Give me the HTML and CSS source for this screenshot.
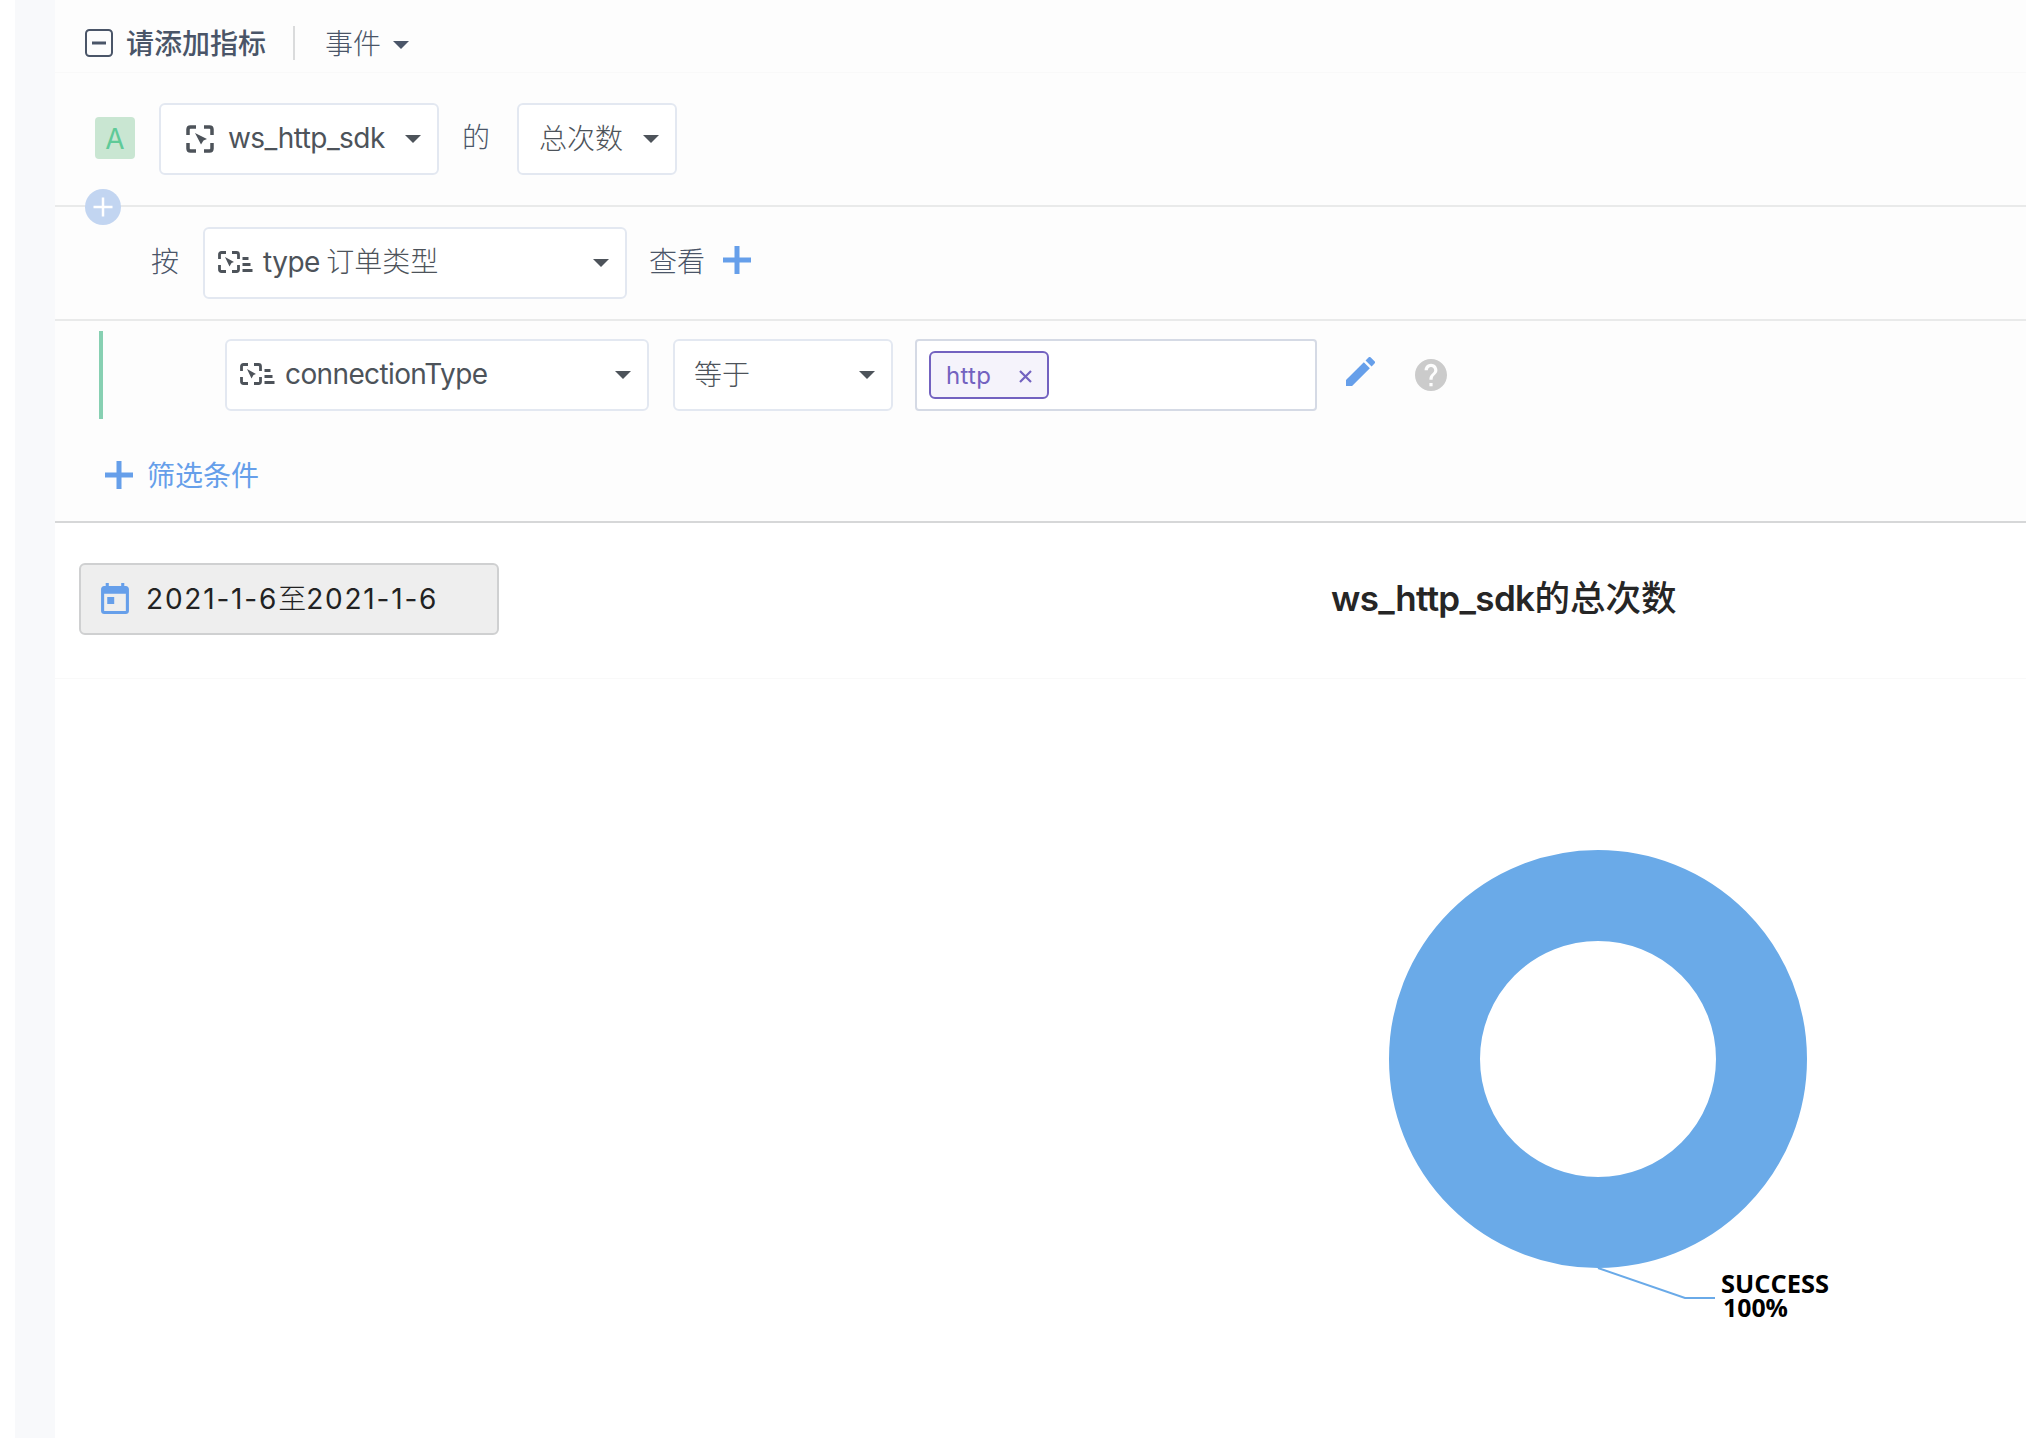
FILE: index.html
```html
<!DOCTYPE html>
<html lang="zh-CN">
<head>
<meta charset="utf-8">
<title>ws_http_sdk的总次数</title>
<link rel="stylesheet" href="styles.css">
</head>
<body>
<svg class="defs" width="0" height="0">
  <symbol id="caret" viewBox="0 0 16 8"><path d="M0 0H16L8 8Z" fill="currentColor"/></symbol>
  <symbol id="plus" viewBox="0 0 28 28"><path d="M14 0V28M0 14H28" stroke="currentColor" stroke-width="5"/></symbol>
  <symbol id="event" viewBox="0 0 28 28">
    <path d="M2 10V4.500Q2 2 4.500 2H10M18 2H23.500Q26 2 26 4.500V10M26 18V23.500Q26 26 23.500 26H18M10 26H4.500Q2 26 2 23.500V18" fill="none" stroke="currentColor" stroke-width="3.500"/>
    <path d="M9 8L21 14L17.500 15.500L15 19.500Z" fill="currentColor"/>
  </symbol>
  <symbol id="prop" viewBox="0 0 35 22">
    <path d="M1.500 8V3.500Q1.500 1.500 3.500 1.500H8M14 1.500H18.500Q20.500 1.500 20.500 3.500V8M20.500 14V18.500Q20.500 20.500 18.500 20.500H14M8 20.500H3.500Q1.500 20.500 1.500 18.500V14" fill="none" stroke="currentColor" stroke-width="2.800"/>
    <path d="M7 6L16 11L13.500 12L11.500 15.500ZM24.500 6H30.500V9H24.500ZM24.500 12H32.500V15H24.500ZM24.500 18H34.500V21H24.500Z" fill="currentColor"/>
  </symbol>
</svg>
<div class="app">
  <aside class="rail"></aside>
  <main class="main">
    <section class="query">
      <header class="row head">
        <svg class="collapse" viewBox="0 0 28 28"><rect x="1" y="1" width="26" height="26" rx="3.500" fill="none" stroke="currentColor" stroke-width="2"/><path d="M7 14H21" stroke="currentColor" stroke-width="3"/></svg>
        <span class="head-title">请添加指标</span>
        <span class="divider"></span>
        <span class="mode">事件</span>
        <svg class="caret"><use href="#caret"/></svg>
      </header>
      <div class="row metric">
        <span class="badge">A</span>
        <div class="select select-event">
          <svg class="event-icon"><use href="#event"/></svg>
          <span class="latin event-name">ws_http_sdk</span>
          <svg class="caret"><use href="#caret"/></svg>
        </div>
        <span class="joiner">的</span>
        <div class="select select-count">
          <span class="value">总次数</span>
          <svg class="caret"><use href="#caret"/></svg>
        </div>
        <svg class="add-metric" viewBox="0 0 36 36"><circle cx="18" cy="18" r="18" fill="#c2d5f1"/><path d="M18 8.500V27.500M8.500 18H27.500" stroke="#fff" stroke-width="2.500"/></svg>
      </div>
      <div class="row group">
        <span class="by">按</span>
        <div class="select select-prop">
          <svg class="prop-icon"><use href="#prop"/></svg>
          <span class="value"><span class="latin prop-type">type</span> 订单类型</span>
          <svg class="caret"><use href="#caret"/></svg>
        </div>
        <span class="view">查看</span>
        <svg class="plus add-group"><use href="#plus"/></svg>
      </div>
      <div class="row filter">
        <span class="bar"></span>
        <div class="select select-prop select-connection">
          <svg class="prop-icon"><use href="#prop"/></svg>
          <span class="latin connection">connectionType</span>
          <svg class="caret"><use href="#caret"/></svg>
        </div>
        <div class="select select-op">
          <span class="value">等于</span>
          <svg class="caret"><use href="#caret"/></svg>
        </div>
        <div class="values">
          <span class="tag"><span class="tag-text">http</span><svg class="close" viewBox="0 0 13 13"><path d="M1 1L12 12M12 1L1 12" stroke="currentColor" stroke-width="2.200"/></svg></span>
        </div>
        <svg class="pencil" viewBox="3 3 18 18"><path fill="currentColor" d="M3 17.250V21h3.750L17.810 9.940l-3.750-3.750L3 17.250zM20.710 7.040a1 1 0 0 0 0-1.410l-2.340-2.340a1 1 0 0 0-1.410 0l-1.830 1.830 3.750 3.750 1.830-1.830z"/></svg>
        <svg class="help" viewBox="2 2 20 20"><path fill="currentColor" d="M12 2C6.480 2 2 6.480 2 12s4.480 10 10 10 10-4.480 10-10S17.520 2 12 2zm1 17h-2v-2h2v2zm2.070-7.750l-.9.920C13.450 12.900 13 13.500 13 15h-2v-.5c0-1.100.45-2.100 1.170-2.830l1.240-1.260c.37-.36.59-.86.59-1.410 0-1.100-.9-2-2-2s-2 .9-2 2H8c0-2.210 1.790-4 4-4s4 1.790 4 4c0 .88-.36 1.680-.93 2.250z"/></svg>
      </div>
      <div class="row add-filter">
        <svg class="plus"><use href="#plus"/></svg>
        <span class="add-filter-text">筛选条件</span>
      </div>
    </section>
    <section class="toolbar">
      <div class="date">
        <svg class="calendar" viewBox="3 1 18 20"><path fill="currentColor" d="M19 3h-1V1h-2v2H8V1H6v2H5c-1.110 0-2 .9-2 2v14c0 1.100.89 2 2 2h14c1.100 0 2-.9 2-2V5c0-1.100-.9-2-2-2zm0 16H5V8h14v11zM7 10h4.500v4.500H7z"/></svg>
        <span class="date-text"><span class="latin">2021-1-6</span>至<span class="latin">2021-1-6</span></span>
      </div>
      <h1 class="title"><span class="title-latin">ws_http_sdk</span>的总次数</h1>
    </section>
    <section class="chart">
      <svg width="1971" height="759" viewBox="55 679 1971 759">
        <circle cx="1598" cy="1059" r="163.500" fill="none" stroke="#6aaae8" stroke-width="91"/>
        <path d="M1598 1268L1685 1298H1715" fill="none" stroke="#6aaae8" stroke-width="2"/>
        <text class="slice-label" x="1721" y="1293" textLength="108" lengthAdjust="spacingAndGlyphs">SUCCESS</text>
        <text class="slice-label" x="1723" y="1317" textLength="65" lengthAdjust="spacingAndGlyphs">100%</text>
      </svg>
    </section>
  </main>
</div>
</body>
</html>
```
FILE: styles.css
```css
* { box-sizing: border-box; }
body {
  margin: 0;
  background: #fff;
  color: #4d535a;
  font: 300 28px/40px "Noto Sans CJK SC", sans-serif;
  overflow: hidden;
}
svg { display: block; flex: none; }
span { white-space: nowrap; }
.defs { position: absolute; }
.latin { font-family: Inter, "Noto Sans CJK SC", sans-serif; font-weight: 400; }
.app { display: flex; height: 1438px; padding-left: 15px; }
.rail { width: 40px; background: #f8f9fb; }
.main { width: 1971px; display: flex; flex-direction: column; background: #fff; }
.query { height: 523px; background: #fdfdfd; border-bottom: 2px solid #d6d7d8; }
.row { display: flex; align-items: center; color: #4a5568; }
.caret { width: 16px; height: 8px; }

.head { height: 73px; padding: 14px 0 0 30px; border-bottom: 1px solid #f9f9f9; }
.collapse { width: 28px; height: 28px; }
.head-title { margin-left: 13px; padding-bottom: 2px; font-weight: 500; }
.divider { width: 2px; height: 34px; margin: 0 30px 0 27px; background: #dadbdc; }
.mode { width: 56px; margin-right: 12px; padding-bottom: 2px; }
.head .caret { margin-top: 4px; }

.metric { position: relative; align-items: flex-start; height: 134px; padding: 30px 0 0 40px; border-bottom: 2px solid #e9eaea; }
.badge { width: 40px; height: 42px; margin-top: 14px; border-radius: 4px; background: #c9e6d2; color: #5fca98; font: 400 28px/44px Inter, sans-serif; text-align: center; }
.select { display: flex; align-items: center; height: 72px; border: 2px solid #e3e8f1; border-radius: 6px; background: #fff; color: #4d535a; }
.select > .caret { margin-left: auto; margin-right: 16px; }
.value { padding-bottom: 5px; }
.select-event { width: 280px; margin-left: 24px; padding-left: 25px; }
.event-icon { width: 28px; height: 28px; margin-right: 14px; }
.event-name { padding-bottom: 3px; letter-spacing: -0.55px; }
.joiner { margin: 13px 27px 0 23px; }
.select-count { width: 160px; padding-left: 20px; }
.add-metric { position: absolute; left: 30px; top: 116px; width: 36px; height: 36px; }

.group { height: 114px; padding: 0 0 0 96px; border-bottom: 2px solid #e9eaea; }
.by { margin-right: 24px; padding-bottom: 7px; }
.select-prop { width: 424px; padding-left: 12px; }
.prop-icon { width: 35px; height: 22px; margin-right: 11px; }
.group .prop-icon { margin-top: -2px; margin-left: 1px; margin-right: 10px; }
.prop-type { letter-spacing: -0.5px; }
.view { margin-left: 22px; padding-bottom: 7px; }
.plus { width: 28px; height: 28px; color: #669fea; }
.add-group { margin: -6px 0 0 18px; }

.filter { height: 108px; padding-left: 44px; }
.bar { width: 4px; height: 88px; background: #87d0b2; }
.select-connection { margin-left: 122px; padding-left: 13px; }
.filter .prop-icon { margin-top: -2px; margin-right: 10px; }
.connection { padding-bottom: 3px; letter-spacing: -0.62px; }
.select-op { width: 220px; margin-left: 24px; padding-left: 19px; }
.values { display: flex; align-items: center; width: 402px; height: 72px; margin-left: 22px; padding-left: 12px; border: 2px solid #d5dae5; border-radius: 4px; background: #fff; }
.tag { display: flex; align-items: center; width: 120px; height: 48px; padding-left: 15px; border: 2px solid #7362c0; border-radius: 6px; background: #f5f3fb; color: #7362c0; font: 400 24px/44px Inter, sans-serif; }
.tag-text { width: 73px; padding-top: 2px; letter-spacing: 0.3px; }
.close { width: 13px; height: 13px; margin-top: 3px; }
.pencil { width: 29px; height: 29px; margin: -7px 0 0 29px; color: #669fea; }
.help { width: 32px; height: 32px; margin-left: 40px; color: #cbcbcb; }

.add-filter { height: 92px; padding-left: 50px; color: #669fea; font-weight: 400; gap: 14px; }
.add-filter-text { padding-bottom: 3px; }

.toolbar { display: flex; align-items: center; height: 156px; padding: 0 0 4px 24px; border-bottom: 1px solid #f9f9f9; }
.date { display: flex; align-items: center; width: 420px; height: 72px; padding-left: 20px; border: 2px solid #cfd0d1; border-radius: 6px; background: #eee; color: #222; }
.calendar { width: 28px; height: 31px; margin-right: 17px; color: #669fea; }
.date-text { padding-bottom: 1px; }
.date .latin { letter-spacing: 1.8px; }
.title { margin: 0 0 0 832px; padding-bottom: 4px; color: #262626; font-size: 35.5px; font-weight: 500; line-height: 50px; }
.title-latin { font-family: Inter, sans-serif; font-size: 35px; font-weight: 600; letter-spacing: -0.65px; }
.chart { height: 759px; }
.slice-label { font: 700 25px "Open Sans", sans-serif; fill: #000; }
```
